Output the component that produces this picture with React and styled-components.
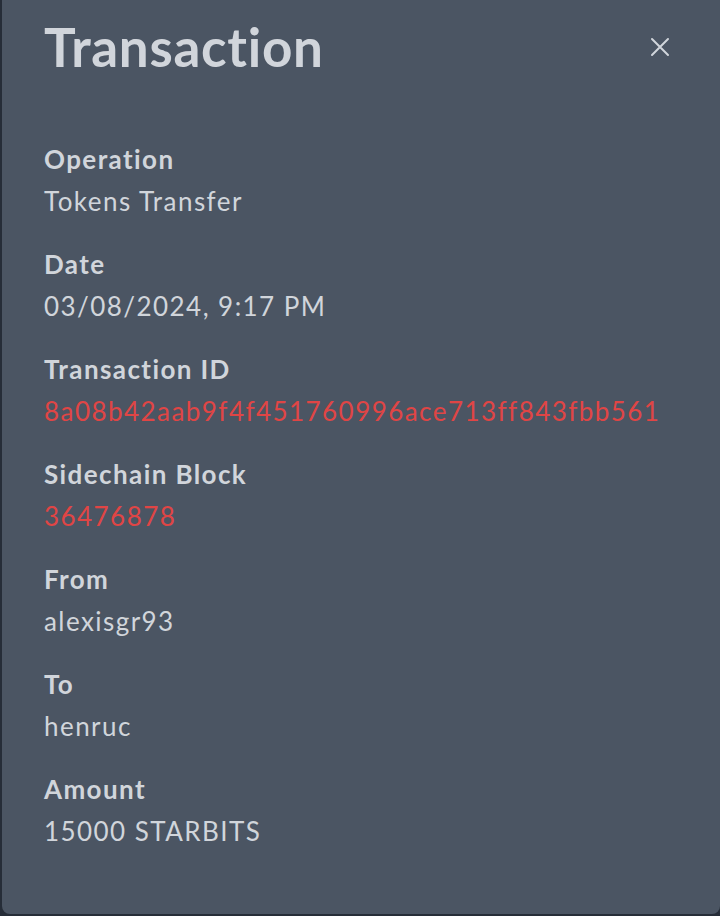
import styled, { createGlobalStyle } from 'styled-components';

const GlobalStyle = createGlobalStyle`
    html, body {
        margin: 0;
        padding: 0;
        background-color: #262d38;
    }
    body {
        font-family: 'Lato', 'Noto Sans', sans-serif;
    }
`;

const Screen = styled.div`
    padding: 0 0 2px 2px;
`;

const Panel = styled.div`
    height: 914px;
    box-sizing: border-box;
    background-color: #4b5563;
    border-radius: 0 0 8px 8px;
    padding: 15px 48px 0 42px;
    color: #d1d5db;
`;

const Header = styled.div`
    display: flex;
    align-items: center;
    justify-content: space-between;
    margin-bottom: 62px;
`;

const Title = styled.h1`
    margin: 0;
    font-size: 53px;
    line-height: 64px;
    font-weight: 700;
    letter-spacing: 0.7px;
    color: #d1d5db;
`;

const CloseButton = styled.button`
    display: flex;
    align-items: center;
    justify-content: center;
    width: 24px;
    height: 24px;
    padding: 0;
    border: none;
    background: transparent;
    color: #d1d5db;
    cursor: pointer;
`;

const List = styled.dl`
    margin: 0;
    display: flex;
    flex-direction: column;
    gap: 27px;
`;

const Field = styled.div`
    display: flex;
    flex-direction: column;
    gap: 6px;
`;

const Label = styled.dt`
    font-size: 26px;
    line-height: 36px;
    font-weight: 700;
    letter-spacing: 1.4px;
    color: #d1d5db;
`;

const Value = styled.dd`
    margin: 0;
    font-size: 26px;
    line-height: 36px;
    font-weight: 400;
    letter-spacing: 1.45px;
    color: ${(props) => (props.$link ? '#e04545' : '#d1d5db')};
`;

const fields = [
    { label: 'Operation', value: 'Tokens Transfer' },
    { label: 'Date', value: '03/08/2024, 9:17 PM' },
    { label: 'Transaction ID', value: '8a08b42aab9f4f451760996ace713ff843fbb561', link: true },
    { label: 'Sidechain Block', value: '36476878', link: true },
    { label: 'From', value: 'alexisgr93' },
    { label: 'To', value: 'henruc' },
    { label: 'Amount', value: '15000 STARBITS' },
];

const App = () => {
    return (
        <Screen>
            <GlobalStyle />
            <Panel>
                <Header>
                    <Title>Transaction</Title>
                    <CloseButton aria-label='Close'>
                        <svg width='20' height='20' viewBox='0 0 20 20' fill='none' stroke='currentColor' strokeWidth='2' strokeLinecap='round'>
                            <path d='M2 2 L18 18 M18 2 L2 18' />
                        </svg>
                    </CloseButton>
                </Header>
                <List>
                    {fields.map((item) => (
                        <Field key={item.label}>
                            <Label>{item.label}</Label>
                            <Value $link={item.link}>{item.value}</Value>
                        </Field>
                    ))}
                </List>
            </Panel>
        </Screen>
    );
};

export default App;
